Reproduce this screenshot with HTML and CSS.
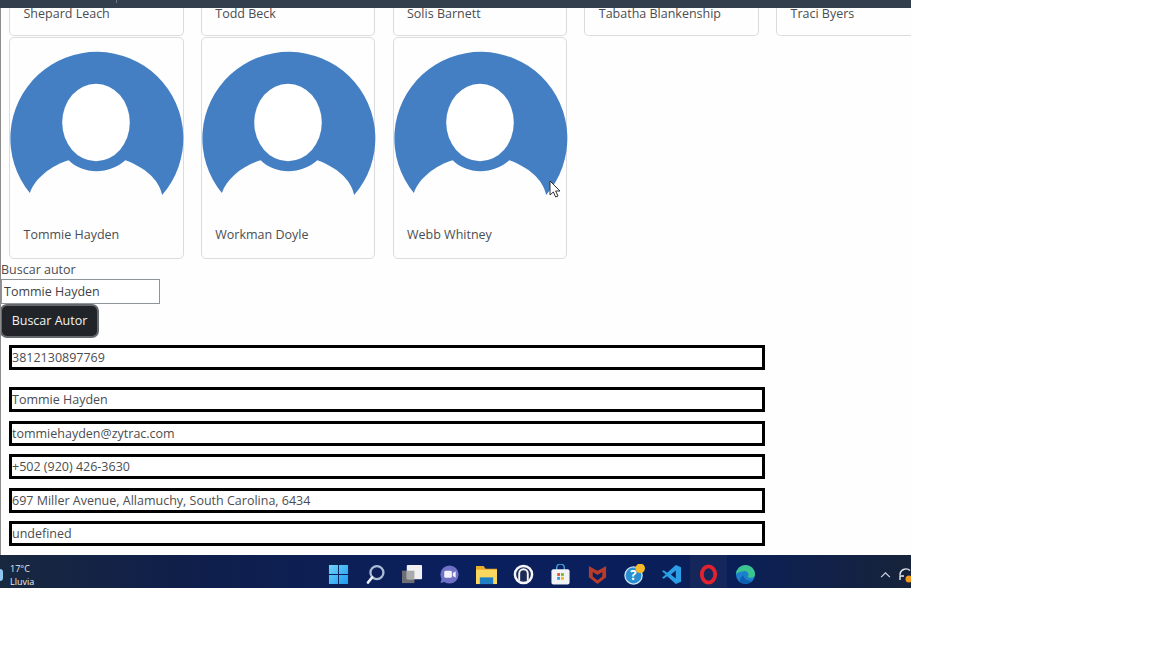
FILE: index.html
```html
<!DOCTYPE html>
<html lang="en">
<head>
    <meta charset="UTF-8">
    <title>Autores</title>
    <link rel="stylesheet" href="styles.css">
</head>
<body>
    <div class="screen">
        <div class="topbar"><span class="topbar-tick"></span></div>

        <main class="page">
            <section class="card-grid">
                <div class="card card-cut"><p class="card-name">Shepard Leach</p></div>
                <div class="card card-cut"><p class="card-name">Todd Beck</p></div>
                <div class="card card-cut"><p class="card-name">Solis Barnett</p></div>
                <div class="card card-cut"><p class="card-name">Tabatha Blankenship</p></div>
                <div class="card card-cut"><p class="card-name">Traci Byers</p></div>

                <div class="card">
                    <svg class="avatar" viewBox="0 0 175 175"><use href="#avatar-shape"/></svg>
                    <p class="card-name">Tommie Hayden</p>
                </div>
                <div class="card">
                    <svg class="avatar" viewBox="0 0 175 175"><use href="#avatar-shape"/></svg>
                    <p class="card-name">Workman Doyle</p>
                </div>
                <div class="card">
                    <svg class="avatar" viewBox="0 0 175 175"><use href="#avatar-shape"/></svg>
                    <p class="card-name">Webb Whitney</p>
                </div>
            </section>

            <form class="search-form">
                <label class="search-label" for="autor">Buscar autor</label>
                <input class="search-input" id="autor" type="text" value="Tommie Hayden">
                <button class="search-button" type="button">Buscar Autor</button>
            </form>

            <section class="details">
                <div class="detail detail-first">3812130897769</div>
                <div class="detail">Tommie Hayden</div>
                <div class="detail">tommiehayden@zytrac.com</div>
                <div class="detail">+502 (920) 426-3630</div>
                <div class="detail">697 Miller Avenue, Allamuchy, South Carolina, 6434</div>
                <div class="detail">undefined</div>
            </section>

            <svg class="cursor" width="12" height="18" viewBox="0 0 12 18">
                <path d="M1 1v14l3.300-3 2.400 5 2.300-1-2.400-5H11z" fill="#fff" stroke="#333" stroke-width="1"/>
            </svg>
        </main>

        <footer class="taskbar">
            <div class="weather">
                <span class="weather-icon"></span>
                <div class="weather-text">
                    <span>17°C</span>
                    <span>Lluvia</span>
                </div>
            </div>

            <div class="task-icons">
                <span class="task-icon">
                    <svg viewBox="0 0 22 22">
                        <defs>
                            <linearGradient id="win-tile" x1="0" y1="0" x2="1" y2="1">
                                <stop offset="0" stop-color="#6fd3fb"/>
                                <stop offset="1" stop-color="#1e9af0"/>
                            </linearGradient>
                        </defs>
                        <path d="M1 1h9.500v9.500H1zM11.500 1H21v9.500h-9.500zM1 11.500h9.500V21H1zM11.500 11.500H21V21h-9.500z" fill="url(#win-tile)"/>
                    </svg>
                </span>
                <span class="task-icon">
                    <svg viewBox="0 0 22 22">
                        <circle cx="12.500" cy="9" r="6.800" fill="none" stroke="#a9bdd6" stroke-width="2.400"/>
                        <path d="M7.500 14l-4.500 5.500" stroke="#e8eef5" stroke-width="2.600" stroke-linecap="round"/>
                    </svg>
                </span>
                <span class="task-icon">
                    <svg viewBox="0 0 22 22">
                        <rect x="0" y="7" width="13" height="13" fill="#6d6f72"/>
                        <rect x="5" y="1" width="16" height="15" rx="1" fill="#f0f0f2"/>
                        <rect x="5" y="7" width="8" height="9" fill="#a9aaae"/>
                    </svg>
                </span>
                <span class="task-icon">
                    <svg viewBox="0 0 22 22">
                        <circle cx="11" cy="11" r="9.500" fill="#6f70c6"/>
                        <path d="M3 15l-1.500 5 5.500-1.500z" fill="#6f70c6"/>
                        <rect x="5.500" y="7" width="8" height="7.500" rx="1.500" fill="#f2f2fb"/>
                        <path d="M14.500 9.500l3-2v7l-3-2z" fill="#f2f2fb"/>
                    </svg>
                </span>
                <span class="task-icon">
                    <svg viewBox="0 0 22 22">
                        <path d="M0 2h8l2 3h12v16H0z" fill="#e9ad2b"/>
                        <path d="M0 6h22v15H0z" fill="#fad75f"/>
                        <path d="M4 14h14v7H4z" fill="#1f7fc4"/>
                    </svg>
                </span>
                <span class="task-icon">
                    <svg viewBox="0 0 22 22">
                        <circle cx="11" cy="11" r="9" fill="#1d2c55" stroke="#f4f6fa" stroke-width="2.600"/>
                        <path d="M6.500 17.500V10a4.500 4.500 0 0 1 9 0v7.500" fill="none" stroke="#f4f6fa" stroke-width="2"/>
                    </svg>
                </span>
                <span class="task-icon">
                    <svg viewBox="0 0 22 22">
                        <path d="M7 6V4a4 4 0 0 1 8 0v2" fill="none" stroke="#3fa4dc" stroke-width="1.500"/>
                        <rect x="1.500" y="5.500" width="19" height="16" rx="2" fill="#f1f3f6"/>
                        <path d="M7.500 9.500h3v3h-3z" fill="#e8532b"/>
                        <path d="M11.500 9.500h3v3h-3z" fill="#7cb82f"/>
                        <path d="M7.500 13.500h3v3h-3z" fill="#2e9fe0"/>
                        <path d="M11.500 13.500h3v3h-3z" fill="#f6b71d"/>
                    </svg>
                </span>
                <span class="task-icon">
                    <svg viewBox="0 0 22 22">
                        <path fill-rule="evenodd" d="M2 2l5 3 4 2 4-2 5-3v12l-9 7-9-7zM6 8.500v4.500l5 4 5-4V8.500l-5 3z" fill="#b83c2b"/>
                    </svg>
                </span>
                <span class="task-icon">
                    <svg viewBox="0 0 22 22">
                        <circle cx="10" cy="12" r="9" fill="#2a8fd0" stroke="#cfe3f2" stroke-width="1.400"/>
                        <text class="help-mark" x="10" y="17">?</text>
                        <circle cx="17" cy="4.500" r="5" fill="#f7b82a"/>
                    </svg>
                </span>
                <span class="task-icon">
                    <svg viewBox="0 0 22 22">
                        <path d="M15.500 1L21 3.500v15L15.500 21 6.500 12.800 2.800 15.500 1 14.300 5 11 1 7.700l1.800-1.200 3.700 2.700zM15.500 6.800L10.300 11l5.200 4.200z" fill="#2b9fe6"/>
                    </svg>
                </span>
                <span class="task-icon task-icon-active">
                    <svg viewBox="0 0 22 22">
                        <ellipse cx="11" cy="11" rx="7" ry="8.500" fill="none" stroke="#e0232e" stroke-width="4"/>
                    </svg>
                </span>
                <span class="task-icon">
                    <svg viewBox="0 0 22 22">
                        <circle cx="11" cy="11" r="10" fill="#1c7fd0"/>
                        <path d="M1 11A10 10 0 0 1 21 11c0 2.500-2.500 3.500-5 3.500-1.500 0-2.500-.5-2.500-1.500 2-3-1-6-4.500-5.500C5 8 2 9 1 11z" fill="#3cc48e"/>
                        <path d="M9 12c0 3 3 5.500 7 5.500 1 0 1.800-.2 2.500-.5A10 10 0 0 1 5 19 7 7 0 0 1 9 12z" fill="#0f5fb0"/>
                    </svg>
                </span>
            </div>

            <div class="tray">
                <svg class="tray-chevron" viewBox="0 0 12 8">
                    <path d="M1 7l5-5 5 5" fill="none" stroke="#d5dae2" stroke-width="1.300"/>
                </svg>
                <svg class="tray-sync" viewBox="0 0 16 16">
                    <path d="M2 8a6 6 0 0 1 10-4.500M14 8a6 6 0 0 1-2 4" fill="none" stroke="#e6e9ee" stroke-width="1.400"/>
                    <path d="M2 13v-4h4" fill="none" stroke="#e6e9ee" stroke-width="1.400"/>
                    <circle cx="11" cy="12" r="3.500" fill="#f39a1e"/>
                </svg>
            </div>
        </footer>
    </div>

    <svg class="defs" width="0" height="0">
        <defs>
            <g id="avatar-shape">
                <path d="M20 156A87 87 0 1 1 153 158C150 142 135 130 116 123C108 130 98 134 87 134C76 134 66 130 59 123C42 128 25 141 20 156Z" fill="#447fc4"/>
                <ellipse cx="86.500" cy="85" rx="34" ry="39" fill="#fff"/>
            </g>
        </defs>
    </svg>
</body>
</html>
```

FILE: styles.css
```css
body {
    margin: 0;
    background-color: #fff;
    font-family: 'Open Sans', 'Noto Sans', sans-serif;
}

.defs {
    display: block;
}

.screen {
    width: 911px;
    height: 588px;
    display: flex;
    flex-direction: column;
    overflow: hidden;
}

.topbar {
    height: 8px;
    flex-shrink: 0;
    padding-left: 116px;
    background-color: #343f4d;
}

.topbar-tick {
    display: block;
    width: 1px;
    height: 3px;
    background-color: #6d7682;
}

.page {
    position: relative;
    flex: 1;
    min-height: 0;
    overflow: hidden;
    border-left: 1px solid #8d8d8d;
    background-color: #fefeff;
    color: #4b4d50;
    font-size: 12.500px;
}

.card-grid {
    display: grid;
    grid-template-columns: repeat(5, 174.500px);
    grid-template-rows: 28px 221.500px;
    column-gap: 17.250px;
    row-gap: 1px;
    padding-left: 8px;
}

.card {
    display: flex;
    flex-direction: column;
    border: 1px solid #dcdcde;
    border-radius: 5px;
    box-sizing: border-box;
}

.card-cut {
    border-top: none;
    border-top-left-radius: 0;
    border-top-right-radius: 0;
}

.card-name {
    margin: 0;
    padding-left: 13.500px;
    line-height: 18px;
}

.card-cut .card-name {
    line-height: 12px;
}

.avatar {
    display: block;
    width: 174px;
    height: 174px;
}

.card .avatar + .card-name {
    margin-top: 14px;
}

.search-form {
    display: flex;
    flex-direction: column;
    align-items: flex-start;
}

.search-label {
    margin-top: 2px;
    line-height: 18px;
}

.search-input {
    width: 159px;
    height: 25px;
    padding: 0 2px;
    border: 1px solid #8f9499;
    box-sizing: border-box;
    font-family: inherit;
    font-size: 12.500px;
    color: #3f4144;
    background-color: #fff;
}

.search-button {
    width: 99px;
    height: 34px;
    margin-left: -1px;
    border: 2px solid #65696e;
    border-radius: 7px;
    box-sizing: border-box;
    background-color: #212529;
    color: #f3f3f3;
    font-family: inherit;
    font-size: 12.500px;
}

.details {
    display: flex;
    flex-direction: column;
    gap: 8.600px;
    margin: 7px 0 0 8px;
}

.detail {
    width: 756px;
    height: 25px;
    border: 3px solid #000;
    box-sizing: border-box;
    line-height: 19px;
    background-color: #fff;
}

.detail-first {
    margin-bottom: 9px;
}

.cursor {
    position: absolute;
    left: 548px;
    top: 172px;
}

.taskbar {
    display: grid;
    grid-template-columns: 320px auto 1fr;
    height: 33px;
    flex-shrink: 0;
    background: linear-gradient(90deg, #18283f 0%, #101f4a 20%, #0a1f5e 50%, #0a1f58 80%, #17233a 100%);
    color: #e8ebf0;
}

.weather {
    display: flex;
    align-items: center;
    gap: 7px;
    padding-top: 6px;
}

.weather-icon {
    width: 3px;
    height: 12px;
    border-radius: 0 3px 3px 0;
    background-color: #8fc8ee;
}

.weather-text {
    display: flex;
    flex-direction: column;
    font-size: 9px;
    line-height: 13px;
}

.task-icons {
    display: flex;
}

.task-icon {
    display: flex;
    align-items: center;
    justify-content: center;
    width: 37px;
    height: 33px;
    padding-top: 6px;
    box-sizing: border-box;
}

.task-icon svg {
    width: 21px;
    height: 21px;
}

.task-icon-active {
    background-color: #14265a;
}

.help-mark {
    fill: #fff;
    font-size: 14px;
    font-weight: 700;
    text-anchor: middle;
}

.tray {
    display: flex;
    align-items: center;
    justify-content: flex-end;
    gap: 7px;
    margin-right: -3px;
    padding-top: 6px;
}

.tray-chevron {
    width: 11px;
    height: 7px;
}

.tray-sync {
    width: 16px;
    height: 16px;
}
```
